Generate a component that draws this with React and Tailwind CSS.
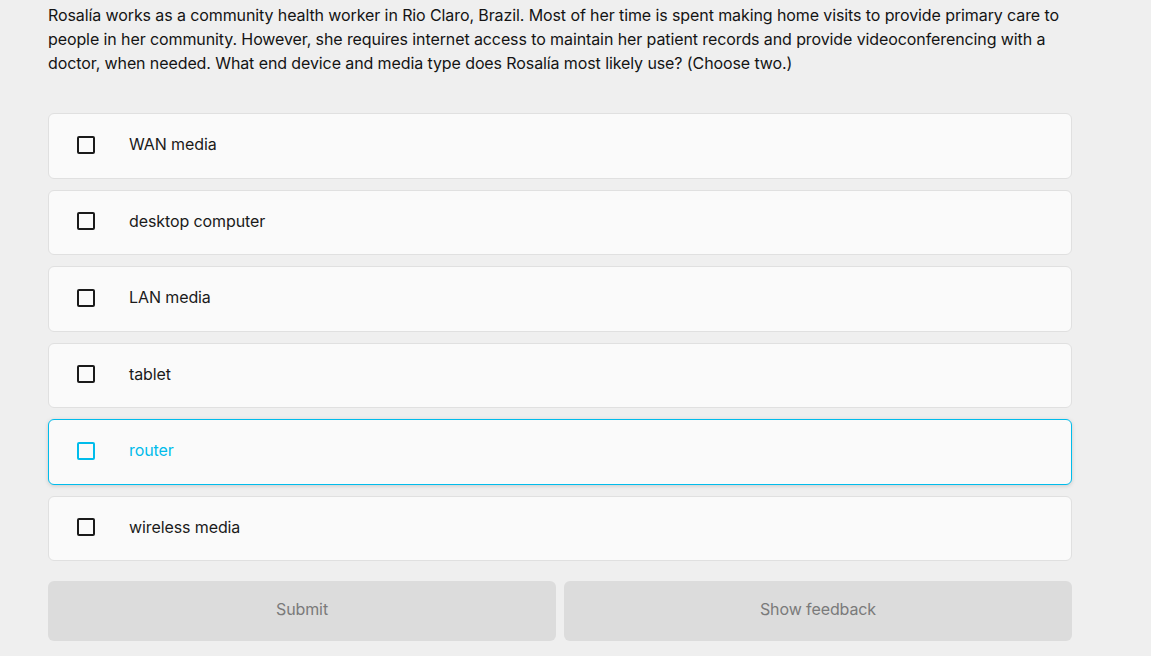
import React from "react";

const options = [
  { label: "WAN media" },
  { label: "desktop computer" },
  { label: "LAN media" },
  { label: "tablet" },
  { label: "router", active: true },
  { label: "wireless media" },
];

export default function App() {
  return (
    <div
      className="min-h-[656px] w-full bg-[#efefef] text-[#1a1a1a]"
      style={{ fontFamily: "Inter, 'Liberation Sans', sans-serif" }}
    >
      <div className="w-[1024px] ml-[48px] pt-[3px]">
        <p className="text-[16px] leading-[24px] tracking-[-0.1px] text-[#141414]">
          Rosalía works as a community health worker in Rio Claro, Brazil. Most of her time is spent making home visits to provide primary care to people in her community. However, she requires internet access to maintain her patient records and provide videoconferencing with a doctor, when needed. What end device and media type does Rosalía most likely use? (Choose two.)
        </p>
        <div className="mt-[38px] flex flex-col gap-[11px]">
          {options.map((o) => (
            <div
              key={o.label}
              className={
                o.active
                  ? "h-[65.5px] flex items-center rounded-[6px] border border-[#00bceb] bg-[#fafafa] shadow-[0_1px_4px_rgba(0,0,0,0.15)]"
                  : "h-[65.5px] flex items-center rounded-[6px] border border-[#e0e0e0] bg-[#fafafa]"
              }
            >
              <div
                className={
                  o.active
                    ? "ml-[28px] -mt-[2px] w-[18px] h-[18px] border-2 border-[#00bceb] rounded-[2px]"
                    : "ml-[28px] -mt-[2px] w-[18px] h-[18px] border-2 border-[#1a1a1a] rounded-[2px]"
                }
              />
              <span
                className={
                  o.active
                    ? "ml-[34px] text-[16px] tracking-[-0.1px] text-[#00bceb] -mt-[3px]"
                    : "ml-[34px] text-[16px] tracking-[-0.1px] text-[#1a1a1a] -mt-[3px]"
                }
              >
                {o.label}
              </span>
            </div>
          ))}
        </div>
        <div className="mt-[20px] flex gap-[8px]">
          <button className="flex-1 h-[60px] pb-[4px] rounded-[6px] bg-[#dcdcdc] text-[16px] tracking-[-0.1px] text-[#7a7a7a]">
            Submit
          </button>
          <button className="flex-1 h-[60px] pb-[4px] rounded-[6px] bg-[#dcdcdc] text-[16px] tracking-[-0.1px] text-[#7a7a7a]">
            Show feedback
          </button>
        </div>
      </div>
    </div>
  );
}
